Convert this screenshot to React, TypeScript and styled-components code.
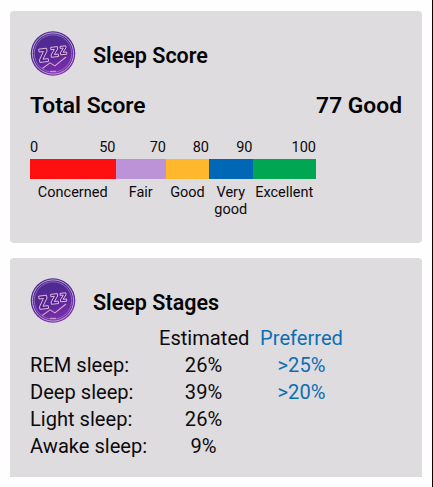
import React from "react";
import styled, { createGlobalStyle } from "styled-components";

const GlobalStyle = createGlobalStyle`
  * { box-sizing: border-box; }
  body { margin: 0; background: #fefefe; }
`;

const Screen = styled.main`
  width: 433px;
  height: 487px;
  overflow: hidden;
  padding: 11px 10px 0;
  border-right: 1px solid #000;
  background: #fefefe;
  color: #0c0a0c;
  font-family: Roboto, "Liberation Sans", sans-serif;
  display: flex;
  flex-direction: column;
  gap: 15.5px;
`;

const Card = styled.section<{ $height: number; $cut?: boolean }>`
  width: 412px;
  height: ${(p) => p.$height}px;
  padding: 20px 20px 0;
  background: #dfdcdf;
  border-radius: ${(p) => (p.$cut ? "4px 4px 0 0" : "4px")};
`;

const CardHeader = styled.header`
  display: flex;
  align-items: flex-start;
  gap: 17px;
  height: 46px;
`;

const Badge = styled.svg`
  width: 46px;
  height: 45px;
  flex: none;
`;

const Title = styled.h2`
  margin: 12px 0 0;
  font-size: 21.5px;
  line-height: 26px;
  font-weight: 600;
  color: #050405;
  white-space: nowrap;
`;

const TotalRow = styled.div`
  display: flex;
  justify-content: space-between;
  margin-top: 16px;
  font-size: 22.8px;
  line-height: 26px;
  font-weight: 600;
  color: #050405;
`;

const Scale = styled.div`
  display: grid;
  grid-template-columns: 85.5px 50.5px 43px 43.5px 63.5px;
  width: 286px;
  margin-top: 20px;
  font-size: 14.5px;
  line-height: 17px;
`;

const Marks = styled.div`
  display: flex;
  justify-content: space-between;
`;

const Mark = styled.span`
  &:only-child { margin-left: auto; }
`;

const Segment = styled.div<{ $color: string }>`
  height: 20px;
  margin-top: 3px;
  background: ${(p) => p.$color};
`;

const Band = styled.div`
  margin-top: 5px;
  text-align: center;
`;

const Stages = styled.div`
  display: grid;
  grid-template-columns: 129px 89px 107px;
  grid-auto-rows: 26.9px;
  align-items: center;
  margin-top: 1px;
  font-size: 20.1px;
  line-height: 26px;
  white-space: nowrap;
`;

const Cell = styled.span<{ $preferred?: boolean }>`
  text-align: center;
  color: ${(p) => (p.$preferred ? "#0b6fb4" : "inherit")};
`;

const StageName = styled.span`
  text-align: left;
`;

const bands = [
  { from: "0", to: "50", name: "Concerned", color: "#ff1010" },
  { to: "70", name: "Fair", color: "#bd93d8" },
  { to: "80", name: "Good", color: "#ffb72e" },
  { to: "90", name: "Very good", color: "#0067b6" },
  { to: "100", name: "Excellent", color: "#00a651" },
];

const stages = [
  { name: "REM sleep:", estimated: "26%", preferred: ">25%" },
  { name: "Deep sleep:", estimated: "39%", preferred: ">20%" },
  { name: "Light sleep:", estimated: "26%", preferred: "" },
  { name: "Awake sleep:", estimated: "9%", preferred: "" },
];

function SleepBadge({ id }: { id: string }) {
  return (
    <Badge viewBox="0 0 46 45" aria-hidden="true">
      <defs>
        <linearGradient id={id} x1="0.3" y1="0" x2="0.7" y2="1">
          <stop offset="0" stopColor="#4b2d8c" />
          <stop offset="0.55" stopColor="#562798" />
          <stop offset="1" stopColor="#8432ae" />
        </linearGradient>
      </defs>
      <circle cx="23" cy="22.5" r="22.3" fill={`url(#${id})`} />
      <circle cx="23" cy="22.5" r="20.6" fill="none" stroke="#bfa4da" strokeWidth="1" />
      <circle cx="23" cy="22.5" r="18.7" fill="none" stroke="#a67fc8" strokeWidth="0.7" />
      <g fill="#4c238b" stroke="#e6b6dc" strokeWidth="1" strokeLinejoin="round">
        <path d="M8.7 18.2 16.5 17.2 17 20 13 28.2 18.2 27.6 18.6 30.4 9.9 31.4 9.5 28.9 13.4 20.5 9.1 21Z" />
        <path d="M20.6 16.4 27.3 15.6 27.6 18 24.3 23.6 28.3 23.1 28.6 25.5 21.4 26.3 21.1 24 24.4 18.3 20.9 18.7Z" />
        <path d="M30 15.4 35.8 14.8 36 16.7 33.1 21.3 36.6 21 36.8 23.2 30.7 23.8 30.4 21.8 33.3 17.1 30.2 17.4Z" />
      </g>
      <path d="M12.3 37.5 20 31.8 24.9 34.9 36 26" fill="none" stroke="#e2a2d1" strokeWidth="1.1" />
      <path d="M20 40.3h6" stroke="#e6b1da" strokeWidth="0.9" />
    </Badge>
  );
}

export default function App() {
  return (
    <>
      <GlobalStyle />
      <Screen>
        <Card $height={231.5}>
          <CardHeader>
            <SleepBadge id="scoreBadge" />
            <Title>Sleep Score</Title>
          </CardHeader>
          <TotalRow>
            <span>Total Score</span>
            <span>77 Good</span>
          </TotalRow>
          <Scale>
            {bands.map((b) => (
              <div key={b.name}>
                <Marks>
                  {b.from && <Mark>{b.from}</Mark>}
                  <Mark>{b.to}</Mark>
                </Marks>
                <Segment $color={b.color} />
                <Band>{b.name}</Band>
              </div>
            ))}
          </Scale>
        </Card>
        <Card $height={219} $cut>
          <CardHeader>
            <SleepBadge id="stagesBadge" />
            <Title>Sleep Stages</Title>
          </CardHeader>
          <Stages>
            <StageName />
            <Cell>Estimated</Cell>
            <Cell $preferred>Preferred</Cell>
            {stages.map((s) => (
              <React.Fragment key={s.name}>
                <StageName>{s.name}</StageName>
                <Cell>{s.estimated}</Cell>
                <Cell $preferred>{s.preferred}</Cell>
              </React.Fragment>
            ))}
          </Stages>
        </Card>
      </Screen>
    </>
  );
}
